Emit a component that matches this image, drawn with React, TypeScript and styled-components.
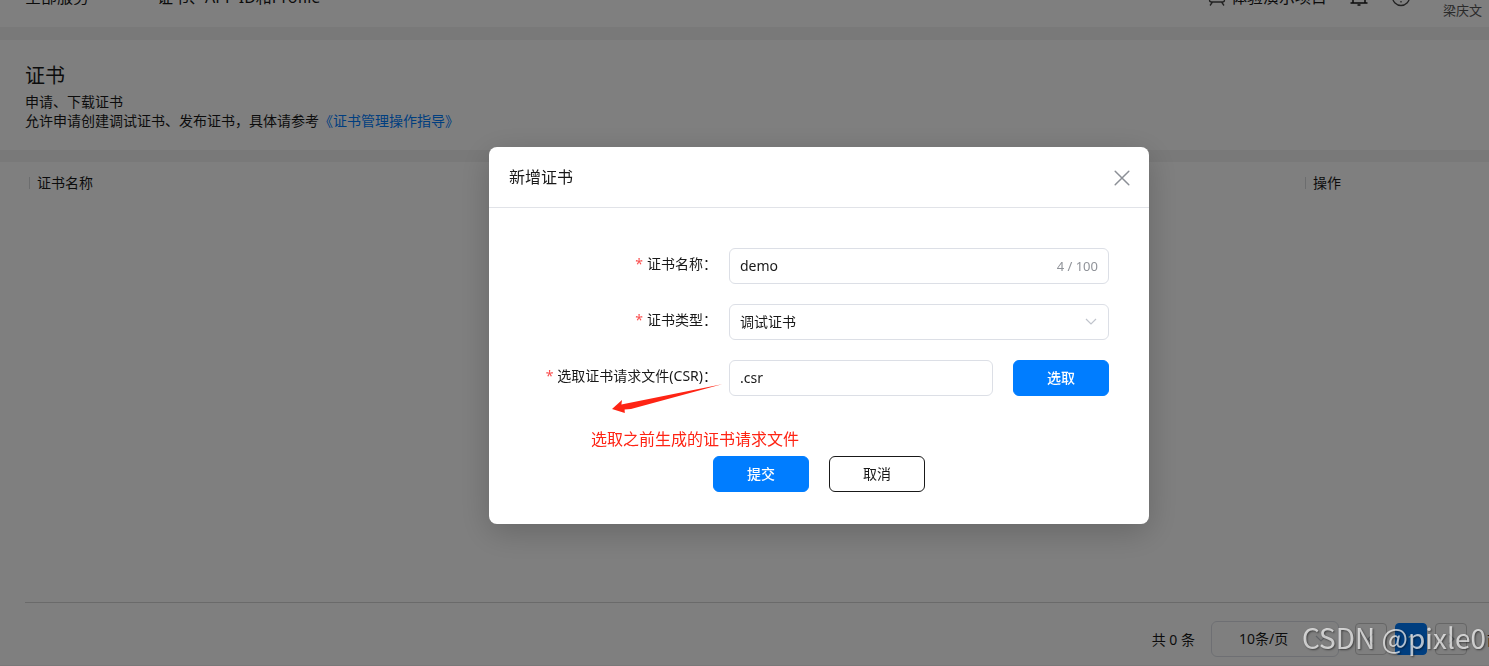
import React from "react";
import styled, { createGlobalStyle } from "styled-components";

const GlobalStyle = createGlobalStyle`
  *, *::before, *::after { box-sizing: border-box; }
  html, body { margin: 0; overflow: hidden; }
  body, button, input, select {
    font-family: "Noto Sans", "Noto Sans CJK SC", sans-serif;
    font-size: 14px;
    font-weight: 400;
    color: #191919;
  }
`;

/* The console is wider than the window and is cut off on the right. */
const Page = styled.div`
  display: flex;
  flex-direction: column;
  gap: 12px;
  width: calc(100% + 149px);
  min-height: 100vh;
  padding-bottom: 1px;
  background: #f2f2f2;
`;

const TopBar = styled.header`
  display: flex;
  align-items: center;
  height: 60px;
  margin-top: -33px;
  margin-bottom: 1px;
  padding: 0 156px 0 25px;
  background: #fff;
  font-size: 16px;
  line-height: 24px;
`;

const NavItem = styled.a`
  display: flex;
  align-items: center;
  gap: 6px;
  margin-right: 48px;
  color: inherit;
  text-decoration: none;
  white-space: nowrap;
`;

const TopActions = styled.div`
  display: flex;
  align-items: center;
  gap: 22px;
  margin-left: auto;
`;

const TopLink = styled.a`
  display: flex;
  align-items: center;
  gap: 5px;
  color: inherit;
  text-decoration: none;
`;

const UserName = styled.span`
  padding: 26px 0 0 10px;
  color: #555;
  font-size: 13px;
  line-height: 14px;
`;

const Intro = styled.section`
  padding: 21px 25px 20px;
  background: #fff;
  line-height: 19px;
`;

const Title = styled.h1`
  margin: 0 0 1px;
  font-size: 20px;
  font-weight: 400;
  line-height: 30px;
`;

const Paragraph = styled.p`
  margin: 0;
`;

const GuideLink = styled.a`
  color: #007dff;
  text-decoration: none;
`;

const ListPanel = styled.section`
  display: flex;
  flex: 1;
  flex-direction: column;
  justify-content: space-between;
  padding-left: 25px;
  background: #fff;
`;

const Table = styled.table`
  width: 100%;
  border-collapse: collapse;
  table-layout: fixed;
`;

const HeadCell = styled.th<{ $width?: string }>`
  width: ${(p) => p.$width ?? "auto"};
  height: 42px;
  padding: 0 4px;
  font-weight: 400;
  text-align: left;
`;

const HeadLabel = styled.span`
  display: flex;
  align-items: center;
  gap: 7px;
  line-height: 20px;

  &::before {
    content: "";
    width: 1px;
    height: 12px;
    background: #d8dadd;
  }
`;

const Pagination = styled.footer`
  display: flex;
  align-items: center;
  justify-content: flex-end;
  gap: 8px;
  padding: 18px 123px 8px 0;
  border-top: 1px solid #d5d5d5;
`;

const Total = styled.span`
  margin-right: 8px;
`;

const SelectBox = styled.span<{ $width?: string }>`
  display: flex;
  align-items: center;
  position: relative;
  width: ${(p) => p.$width ?? "100%"};

  svg {
    position: absolute;
    right: 11px;
    pointer-events: none;
  }
`;

const Select = styled.select<{ $inset: number }>`
  appearance: none;
  width: 100%;
  height: 36px;
  padding: 0 ${(p) => p.$inset}px 2px;
  border: 1px solid #dcdfe6;
  border-radius: 6px;
  background: transparent;
`;

const PageButton = styled.button<{ $active?: boolean }>`
  display: grid;
  place-items: center;
  width: 32px;
  height: 32px;
  padding: 0;
  border: 1px solid ${(p) => (p.$active ? "#007dff" : "#cccccc")};
  border-radius: 4px;
  background: ${(p) => (p.$active ? "#007dff" : "#fff")};
  color: ${(p) => (p.$active ? "#fff" : "#a0a4aa")};
`;

const PagerButtons = styled.div`
  display: flex;
  gap: 8px;
  margin: 0 12px 0 8px;
`;

const Overlay = styled.div`
  position: fixed;
  top: 0;
  left: 0;
  display: flex;
  align-items: flex-start;
  justify-content: center;
  width: calc(100% + 149px);
  height: 100%;
  padding-top: 147px;
  background: rgba(0, 0, 0, 0.5);
`;

const Dialog = styled.div`
  position: relative;
  width: 660px;
  border-radius: 8px;
  background: #fff;
  box-shadow: 0 8px 32px rgba(0, 0, 0, 0.2);
`;

const DialogHeader = styled.div`
  display: flex;
  align-items: center;
  justify-content: space-between;
  height: 61px;
  padding: 0 19px 0 20px;
  border-bottom: 1px solid #e1e3e8;
`;

const DialogTitle = styled.h2`
  margin: 0;
  font-size: 16px;
  font-weight: 400;
  line-height: 24px;
`;

const CloseButton = styled.button`
  display: flex;
  padding: 2px 0 0;
  border: 0;
  background: none;
  color: #8b8f96;
`;

const Form = styled.form`
  display: flex;
  flex-direction: column;
  gap: 20px;
  padding: 40px 40px 32px 20px;
`;

const Field = styled.div`
  display: grid;
  grid-template-columns: 220px 1fr;
`;

const Label = styled.label`
  padding-right: 12px;
  line-height: 32px;
  text-align: right;
  white-space: nowrap;

  &::before {
    content: "*";
    margin-right: 4px;
    color: #fa4f4f;
  }
`;

const Control = styled.div`
  display: flex;
  gap: 20px;
`;

const InputBox = styled.span`
  display: flex;
  flex: 1;
  align-items: center;
  height: 36px;
  padding: 0 10px;
  border: 1px solid #dcdfe6;
  border-radius: 6px;
`;

const Input = styled.input`
  flex: 1;
  min-width: 0;
  padding: 0 0 2px;
  border: 0;
  outline: 0;
  background: none;
`;

const Counter = styled.span`
  color: #909399;
  font-size: 13px;
`;

const Button = styled.button<{ $primary?: boolean }>`
  width: 96px;
  height: 36px;
  padding: 0 0 2px;
  border: 1px solid ${(p) => (p.$primary ? "#007dff" : "#191919")};
  border-radius: 6px;
  background: ${(p) => (p.$primary ? "#007dff" : "#fff")};
  color: ${(p) => (p.$primary ? "#fff" : "#191919")};
  font-weight: ${(p) => (p.$primary ? 500 : 400)};
`;

const FormActions = styled.div`
  display: flex;
  justify-content: center;
  gap: 20px;
  padding: 40px 0 0 20px;
`;

const Arrow = styled.svg`
  position: absolute;
  top: 234px;
  left: 120px;
`;

const Note = styled.span`
  position: absolute;
  top: 280px;
  left: 102px;
  color: #fe2414;
  font-size: 16px;
  line-height: 24px;
`;

const Watermark = styled.span`
  position: fixed;
  right: 3px;
  bottom: 13px;
  color: rgba(255, 255, 255, 0.7);
  font-family: "Noto Sans CJK SC", sans-serif;
  font-size: 28px;
  line-height: 32px;
  text-shadow: 1px 1px 2px rgba(0, 0, 0, 0.5);
  pointer-events: none;
`;

type ChevronProps = { d?: string; color?: string };

const Chevron = ({ d = "M2 4l5 5 5-5", color = "#c0c4cc" }: ChevronProps) => (
  <svg width="14" height="14" viewBox="0 0 14 14" fill="none" stroke={color} strokeWidth="1.2" aria-hidden="true">
    <path d={d} />
  </svg>
);

export default function App() {
  return (
    <>
      <GlobalStyle />
      <Page>
        <TopBar>
          <NavItem href="#services">
            全部服务
            <Chevron d="M3 4l4 4 4-4z" color="#888" />
          </NavItem>
          <NavItem href="#profile">
            证书、APP ID和Profile
            <Chevron d="M3 4l4 4 4-4z" color="#888" />
          </NavItem>
          <TopActions>
            <TopLink href="#demo">
              <svg width="18" height="20" viewBox="0 0 18 20" fill="none" stroke="#444" strokeWidth="1.3" aria-hidden="true">
                <path d="M4 9V5a2 2 0 0 1 2-2h6a2 2 0 0 1 2 2v4" />
                <path d="M1.5 9v4a2 2 0 0 0 2 2h11a2 2 0 0 0 2-2V9M4.5 15L2 18.5M13.5 15l2.5 3.5" />
              </svg>
              体验演示项目
            </TopLink>
            <svg width="20" height="20" viewBox="0 0 20 20" fill="none" stroke="#191919" strokeWidth="1.5" aria-hidden="true">
              <path d="M4 16V9a6 6 0 0 1 12 0v7M1.5 16h17M8.5 18h3" />
            </svg>
            <svg width="20" height="20" viewBox="0 0 20 20" fill="none" stroke="#444" strokeWidth="1.3" aria-hidden="true">
              <circle cx="10" cy="10" r="8.5" />
              <path d="M7.5 8a2.5 2.5 0 1 1 2.5 2.7v1.3M10 14v1.5" />
            </svg>
            <UserName>梁庆文</UserName>
          </TopActions>
        </TopBar>

        <Intro>
          <Title>证书</Title>
          <Paragraph>申请、下载证书</Paragraph>
          <Paragraph>
            允许申请创建调试证书、发布证书，具体请参考
            <GuideLink href="#guide">《证书管理操作指导》</GuideLink>
          </Paragraph>
        </Intro>

        <ListPanel>
          <Table>
            <thead>
              <tr>
                <HeadCell>
                  <HeadLabel>证书名称</HeadLabel>
                </HeadCell>
                <HeadCell $width="337px">
                  <HeadLabel>操作</HeadLabel>
                </HeadCell>
              </tr>
            </thead>
          </Table>
          <Pagination>
            <Total>共 0 条</Total>
            <SelectBox $width="128px">
              <Select $inset={27} aria-label="每页条数">
                <option>10条/页</option>
              </Select>
              <Chevron />
            </SelectBox>
            <PagerButtons>
              <PageButton aria-label="上一页">
                <Chevron d="M9 2L4 7l5 5" color="#a0a4aa" />
              </PageButton>
              <PageButton $active>1</PageButton>
              <PageButton aria-label="下一页">
                <Chevron d="M5 2l5 5-5 5" color="#a0a4aa" />
              </PageButton>
            </PagerButtons>
            <span>前往</span>
          </Pagination>
        </ListPanel>
      </Page>

      <Overlay>
        <Dialog role="dialog" aria-labelledby="dialog-title">
          <DialogHeader>
            <DialogTitle id="dialog-title">新增证书</DialogTitle>
            <CloseButton aria-label="关闭">
              <svg width="16" height="16" viewBox="0 0 16 16" fill="none" stroke="currentColor" strokeWidth="1.5" strokeLinecap="round" aria-hidden="true">
                <path d="M1.2 1.2l13.6 13.6M14.8 1.2L1.2 14.8" />
              </svg>
            </CloseButton>
          </DialogHeader>
          <Form>
            <Field>
              <Label htmlFor="cert-name">证书名称：</Label>
              <Control>
                <InputBox>
                  <Input id="cert-name" defaultValue="demo" maxLength={100} />
                  <Counter>4 / 100</Counter>
                </InputBox>
              </Control>
            </Field>
            <Field>
              <Label htmlFor="cert-type">证书类型：</Label>
              <Control>
                <SelectBox>
                  <Select id="cert-type" $inset={10}>
                    <option>调试证书</option>
                  </Select>
                  <Chevron />
                </SelectBox>
              </Control>
            </Field>
            <Field>
              <Label htmlFor="cert-file">选取证书请求文件(CSR)：</Label>
              <Control>
                <InputBox>
                  <Input id="cert-file" defaultValue=".csr" />
                </InputBox>
                <Button type="button" $primary>
                  选取
                </Button>
              </Control>
            </Field>
            <FormActions>
              <Button type="button" $primary>
                提交
              </Button>
              <Button type="button">取消</Button>
            </FormActions>
          </Form>
          <Arrow width="116" height="36" viewBox="0 0 116 36" aria-hidden="true">
            <path d="M3 28L13 19l-.6 4.6L113 3.2 22 28l-6.4.6L15.8 32z" fill="#fe2414" />
          </Arrow>
          <Note>选取之前生成的证书请求文件</Note>
        </Dialog>
      </Overlay>
      <Watermark>CSDN @pixle0</Watermark>
    </>
  );
}
